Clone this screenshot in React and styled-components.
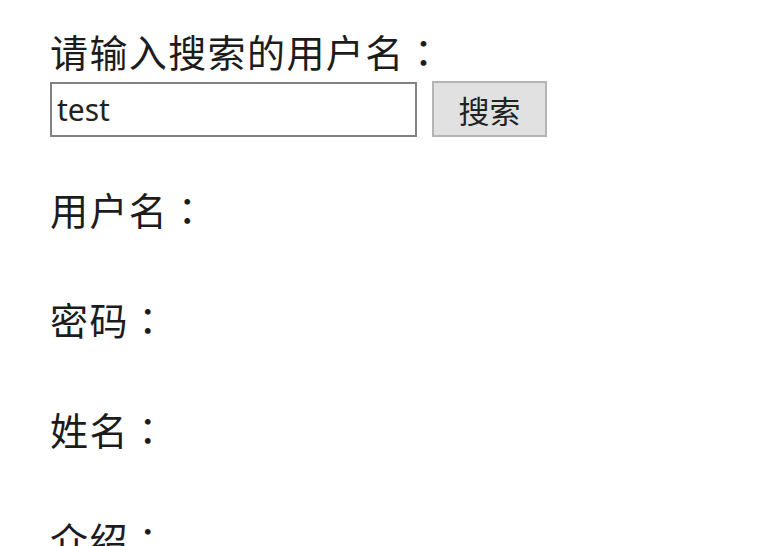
import React from 'react'
import styled, { createGlobalStyle } from 'styled-components'

const GlobalStyle = createGlobalStyle`
  html, body {
    margin: 0;
    padding: 0;
    background: #ffffff;
  }
  body {
    font-family: 'Noto Sans CJK SC', 'Noto Sans', sans-serif;
    color: #1c1c1c;
  }
`

const Page = styled.div`
  padding: 29px 0 0 50px;
  width: 782px;
  height: 546px;
  box-sizing: border-box;
  overflow: hidden;
`

const Prompt = styled.div`
  font-size: 38px;
  line-height: 44px;
  letter-spacing: 1.4px;
`

// full-width colon sits centred in its cell, as in the reference
const Colon = styled.span`
  font-family: 'Noto Sans CJK TC', 'Noto Sans CJK SC', sans-serif;
`

const SearchRow = styled.form`
  display: flex;
  align-items: stretch;
  gap: 15px;
  margin-top: 9px;
`

const SearchInput = styled.input`
  width: 367px;
  height: 55px;
  box-sizing: border-box;
  border: 2px solid #828282;
  padding: 0 5px;
  font-family: 'Noto Sans', 'Open Sans', sans-serif;
  font-size: 30px;
  color: #222;
  background: #fff;
  outline: none;
`

const SearchButton = styled.button`
  width: 115px;
  height: 56px;
  margin-top: -1px;
  box-sizing: border-box;
  border: 2px solid #b4b4b4;
  background: #e1e1e1;
  color: #222;
  font-family: 'Noto Sans CJK SC', sans-serif;
  font-size: 31px;
  padding: 0;
`

const Fields = styled.div`
  display: flex;
  flex-direction: column;
  gap: 66px;
  margin-top: 50px;
`

const Field = styled.div`
  font-size: 38px;
  line-height: 44px;
  letter-spacing: 1.4px;
`

const fields = ['用户名', '密码', '姓名', '介绍']

const App = () => {
  return (
    <>
      <GlobalStyle />
      <Page>
        <Prompt>
          请输入搜索的用户名<Colon>：</Colon>
        </Prompt>
        <SearchRow onSubmit={(e) => e.preventDefault()}>
          <SearchInput type='text' defaultValue='test' />
          <SearchButton type='submit'>搜索</SearchButton>
        </SearchRow>
        <Fields>
          {fields.map((label) => (
            <Field key={label}>
              {label}
              <Colon>：</Colon>
            </Field>
          ))}
        </Fields>
      </Page>
    </>
  )
}

export default App
